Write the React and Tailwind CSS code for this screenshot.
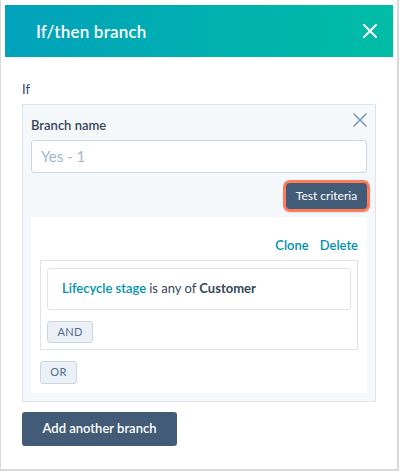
import React from 'react';

const font = { fontFamily: 'Lato, "Open Sans", sans-serif' };

const CloseIcon = ({ className = '', stroke = 2 }) => (
  <svg viewBox="0 0 14 14" className={className} fill="none" stroke="currentColor" strokeWidth={stroke} strokeLinecap="round">
    <path d="M1 1 L13 13 M13 1 L1 13" />
  </svg>
);

const SmallButton = ({ label, className = '' }) => (
  <button className={`flex items-center justify-center rounded-[3px] border border-[#cbd6e2] bg-[#eaf0f6] text-[11px] tracking-[0.3px] text-[#506e91] ${className}`}>
    {label}
  </button>
);

export default function App() {
  return (
    <div className="h-[472px] w-[400px] bg-white text-[#33475b]" style={font}>
      <div className="h-[471px] w-[399px] border-b-2 border-l border-r-2 border-[#d9d9d9] pl-[4px] pt-[5px]">
        {/* header */}
        <div className="flex h-[52px] w-[388px] items-center justify-between bg-[linear-gradient(90deg,#00a2bb,#00bda5)] pl-[31px] pr-[16px]">
          <h1 className="text-[17px] font-semibold leading-none tracking-[0.2px] text-white">If/then branch</h1>
          <CloseIcon className="h-[14px] w-[14px] text-white" stroke={2} />
        </div>

        {/* body */}
        <div className="w-[388px] px-[17px] pt-[24px]">
          <div className="mb-[7px] text-[13px] leading-[16px]">If</div>

          <div className="border border-[#dfe3eb] bg-[#f5f8fa] px-[8px] pb-[8px] pt-[8px]">
            <div className="flex items-start justify-between">
              <span className="mt-[4px] text-[13px] font-semibold leading-[16px]">Branch name</span>
              <CloseIcon className="h-[14px] w-[14px] text-[#7c98b6]" stroke={1.6} />
            </div>

            <div className="mt-[7px] flex h-[33px] items-center rounded-[3px] border border-[#cbd6e2] bg-white px-[9px] text-[15px] text-[#a3b6c9]">
              Yes - 1
            </div>

            <div className="mt-[10px] flex justify-end">
              <button className="flex h-[26px] w-[81px] items-center justify-center rounded-[4px] bg-[#425b76] text-[12px] text-white shadow-[0_1px_4px_rgba(0,0,0,0.45)] ring-[3px] ring-[#ff7a59]">
                Test criteria
              </button>
            </div>

            <div className="mt-[8px] bg-white px-[9px] pb-[9px] pt-[20px]">
              <div className="flex justify-end gap-[11px] text-[13px] font-semibold leading-[16px] text-[#0091ae]">
                <span>Clone</span>
                <span>Delete</span>
              </div>

              <div className="mt-[7px] border border-[#dfe3eb] px-[6px] pb-[6px] pt-[7px]">
                <div className="flex h-[42px] items-center rounded-[3px] border border-[#dfe3eb] pl-[14px] text-[13px]">
                  <span className="font-semibold text-[#0091ae]">Lifecycle stage</span>
                  <span className="ml-[3px]">is any of</span>
                  <span className="ml-[3px] font-bold">Customer</span>
                </div>
                <SmallButton label="AND" className="mt-[11px] h-[22px] w-[46px]" />
              </div>

              <SmallButton label="OR" className="mt-[11px] h-[23px] w-[37px]" />
            </div>
          </div>

          <button className="mt-[10px] flex h-[34px] w-[155px] items-center justify-center rounded-[3px] bg-[#425b76] text-[13px] font-semibold text-white">
            Add another branch
          </button>
        </div>
      </div>
    </div>
  );
}
